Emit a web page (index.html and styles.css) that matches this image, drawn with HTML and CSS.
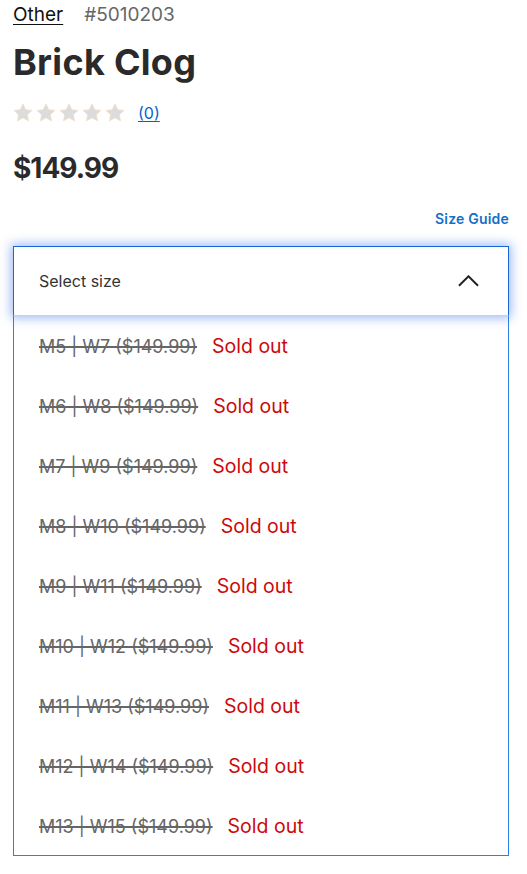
FILE: index.html
```html
<!DOCTYPE html>
<html>
<head>
<meta charset="utf-8">
<link rel="stylesheet" href="styles.css">
</head>
<body>
<div class="page">
  <div class="crumbs"><a class="cat" href="#">Other</a><span class="sku">#5010203</span></div>
  <h1 class="title">Brick Clog</h1>
  <div class="rating">
    <div class="stars">
      <svg viewBox="0 0 24 24" class="star"><path d="M12 1l3.3 7 7.5.9-5.6 5.1 1.5 7.5L12 17.8l-6.7 3.7 1.5-7.5L1.2 8.9l7.5-.9z"/></svg>
      <svg viewBox="0 0 24 24" class="star"><path d="M12 1l3.3 7 7.5.9-5.6 5.1 1.5 7.5L12 17.8l-6.7 3.7 1.5-7.5L1.2 8.9l7.5-.9z"/></svg>
      <svg viewBox="0 0 24 24" class="star"><path d="M12 1l3.3 7 7.5.9-5.6 5.1 1.5 7.5L12 17.8l-6.7 3.7 1.5-7.5L1.2 8.9l7.5-.9z"/></svg>
      <svg viewBox="0 0 24 24" class="star"><path d="M12 1l3.3 7 7.5.9-5.6 5.1 1.5 7.5L12 17.8l-6.7 3.7 1.5-7.5L1.2 8.9l7.5-.9z"/></svg>
      <svg viewBox="0 0 24 24" class="star"><path d="M12 1l3.3 7 7.5.9-5.6 5.1 1.5 7.5L12 17.8l-6.7 3.7 1.5-7.5L1.2 8.9l7.5-.9z"/></svg>
    </div>
    <a class="count" href="#">(0)</a>
  </div>
  <div class="price">$149.99</div>
  <div class="guide-row"><a class="guide" href="#">Size Guide</a></div>
  <div class="select">
    <div class="select-head">
      <span>Select size</span>
      <svg class="chev" viewBox="0 0 22 12"><path d="M1 11L11 1l10 10" fill="none" stroke="#222" stroke-width="2"/></svg>
    </div>
    <ul class="options">
      <li><s>M5 | W7 ($149.99)</s><span class="out">Sold out</span></li>
      <li><s>M6 | W8 ($149.99)</s><span class="out">Sold out</span></li>
      <li><s>M7 | W9 ($149.99)</s><span class="out">Sold out</span></li>
      <li><s>M8 | W10 ($149.99)</s><span class="out">Sold out</span></li>
      <li><s>M9 | W11 ($149.99)</s><span class="out">Sold out</span></li>
      <li><s>M10 | W12 ($149.99)</s><span class="out">Sold out</span></li>
      <li><s>M11 | W13 ($149.99)</s><span class="out">Sold out</span></li>
      <li><s>M12 | W14 ($149.99)</s><span class="out">Sold out</span></li>
      <li><s>M13 | W15 ($149.99)</s><span class="out">Sold out</span></li>
    </ul>
  </div>
</div>
</body>
</html>
```
FILE: styles.css
```css
html, body { margin: 0; padding: 0; background: #fff; }
body { font-family: Inter, "Noto Sans", sans-serif; color: #222; }
.page { padding: 0 18px 0 13px; }
.crumbs { display: flex; align-items: baseline; gap: 21px; font-size: 19px; line-height: 22px; padding-top: 4px; }
.cat { color: #111; text-decoration: underline; text-underline-offset: 3px; }
.sku { color: #666; }
.title { margin: 14px 0 0; font-size: 36px; line-height: 44px; font-weight: 700; color: #2a2a2a; letter-spacing: 0.3px; }
.rating { display: flex; align-items: center; margin-top: 17px; height: 24px; }
.stars { display: flex; gap: 3px; }
.star { width: 20px; height: 20px; fill: #dcdcdc; stroke: #f0dcc0; stroke-width: 0.8; }
.count { margin-left: 13px; color: #0a5fd0; font-size: 16px; text-underline-offset: 2px; }
.price { margin-top: 26px; font-size: 28px; line-height: 34px; font-weight: 700; color: #2a2a2a; letter-spacing: -1px; }
.guide-row { display: flex; justify-content: flex-end; margin-top: 25px; }
.guide { color: #1470c4; text-decoration: none; font-size: 14px; line-height: 18px; font-weight: 600; letter-spacing: 0.2px; }
.select { margin-top: 18px; }
.select-head { display: flex; align-items: center; justify-content: space-between; height: 68px; padding: 0 29px 0 25px; border: 1px solid #1a66d6; border-bottom-color: #cfcfcf; box-shadow: 0 0 10px 2px rgba(40,100,230,0.45); position: relative; z-index: 1; font-size: 16px; color: #333; }
.chev { width: 21px; height: 12px; }
.options { list-style: none; margin: 0; padding: 0; border: 1px solid #2f80e4; border-top: none; height: 539px; }
.options li { display: flex; align-items: center; gap: 15px; height: 60px; padding-left: 25px; font-size: 18px; }
.options s { color: #666; text-decoration-thickness: 2px; }
.out { color: #cc0a0a; font-size: 19.5px; }
```
